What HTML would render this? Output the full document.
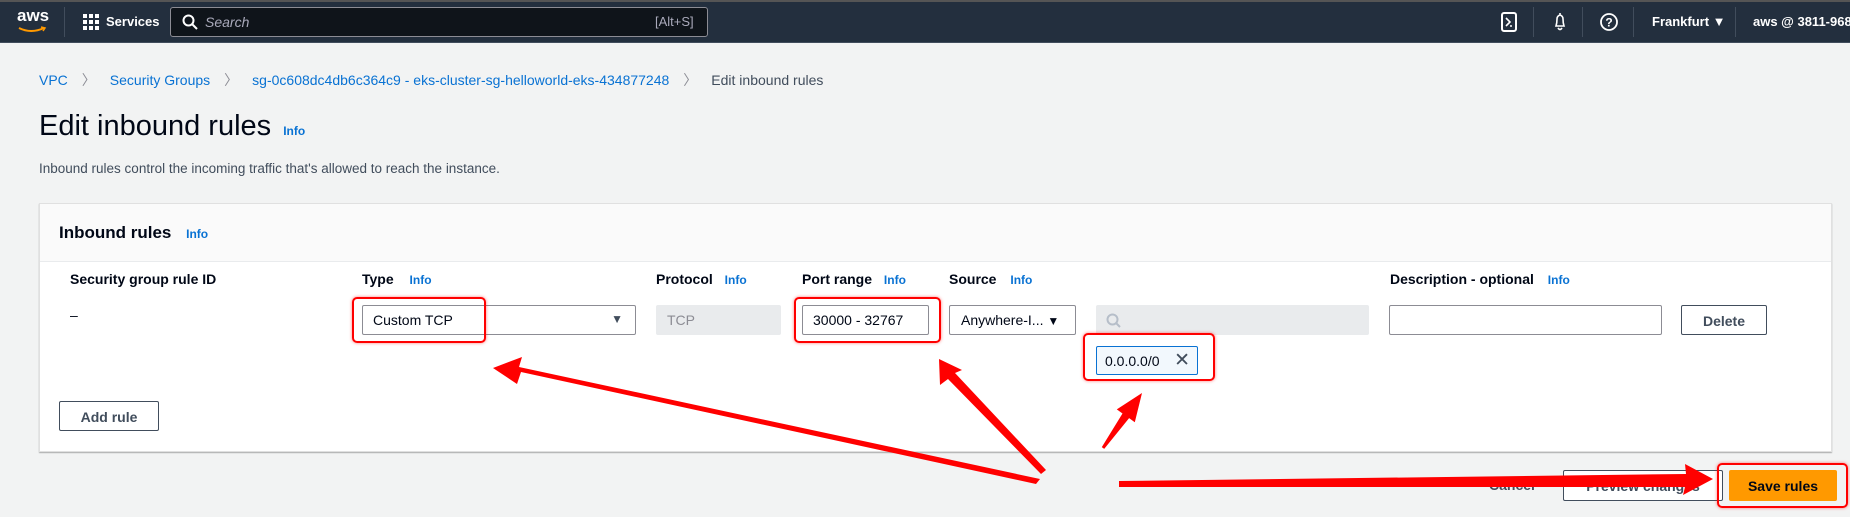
<!DOCTYPE html>
<html><head><meta charset="utf-8"><style>
*{box-sizing:border-box;margin:0;padding:0}
body{width:1850px;height:517px;overflow:hidden;background:#f2f3f3;font-family:"Liberation Sans",sans-serif;color:#000716;position:relative;font-size:14px}
.abs{position:absolute}
.nav{left:0;top:0;width:1850px;height:43px;background:#232f3e;border-top:2px solid #555;border-bottom:1px solid #414d5c}
.w{color:#fff;font-size:13px}
.link{color:#0972d3}
.info{color:#0972d3;font-weight:bold;font-size:12px}
.hd{font-weight:bold;font-size:14px}
.box{border:1px solid #8c8c94;border-radius:2px;background:#fff;height:30px;padding:6px 10px;font-size:14px}
.btn{border:1px solid #414d5c;border-radius:2px;background:#fff;font-weight:bold;font-size:14px;color:#414d5c;text-align:center;padding-top:7px}
.red{border:2px solid #f00;border-radius:5px;box-shadow:0 0 3px rgba(255,0,0,.5)}
.sep{width:1px;height:30px;background:#414d5c;top:7px}
</style></head><body>
<div class="abs nav"></div>
<div class="abs w" style="left:17px;top:6px;font-size:17px;font-weight:bold">aws</div>
<svg class="abs" style="left:17px;top:26px" width="30" height="8"><path d="M2 2 Q14 8 27 2" stroke="#f90" stroke-width="2" fill="none"/><path d="M24 1 L28 2 L26 5" stroke="#f90" stroke-width="1.5" fill="none"/></svg>
<div class="abs sep" style="left:64px"></div>
<svg class="abs" style="left:83px;top:14px" width="16" height="16" fill="#fff"><rect x="0" y="0" width="4" height="4"/><rect x="6" y="0" width="4" height="4"/><rect x="12" y="0" width="4" height="4"/><rect x="0" y="6" width="4" height="4"/><rect x="6" y="6" width="4" height="4"/><rect x="12" y="6" width="4" height="4"/><rect x="0" y="12" width="4" height="4"/><rect x="6" y="12" width="4" height="4"/><rect x="12" y="12" width="4" height="4"/></svg>
<div class="abs w" style="left:106px;top:14px;font-weight:bold">Services</div>
<div class="abs" style="left:170px;top:7px;width:538px;height:30px;background:#0f141a;border:1px solid #8c8c94;border-radius:3px"></div>
<svg class="abs" style="left:182px;top:14px" width="16" height="16"><circle cx="6.5" cy="6.5" r="5" stroke="#fff" stroke-width="2" fill="none"/><path d="M10 10 L15 15" stroke="#fff" stroke-width="2"/></svg>
<div class="abs" style="left:205px;top:14px;color:#aab;font-style:italic;font-size:14px">Search</div>
<div class="abs" style="left:655px;top:14px;color:#aab;font-size:13px">[Alt+S]</div>
<svg class="abs" style="left:1501px;top:12px" width="16" height="20"><rect x="1" y="1" width="14" height="18" rx="2" stroke="#fff" stroke-width="2" fill="none"/><path d="M5 6 L9 10 L5 14 M9 14 H11" stroke="#fff" stroke-width="1.6" fill="none"/></svg>
<div class="abs sep" style="left:1533px"></div>
<svg class="abs" style="left:1552px;top:11px" width="16" height="22"><path d="M8 2 V4 M4 15 Q5 12 5 8 Q5 5 8 4 Q11 5 11 8 Q11 12 12 15 Z M6 17 Q8 20 10 17" stroke="#fff" stroke-width="1.6" fill="none"/></svg>
<div class="abs sep" style="left:1582px"></div>
<svg class="abs" style="left:1599px;top:12px" width="20" height="20"><circle cx="10" cy="10" r="8" stroke="#fff" stroke-width="1.8" fill="none"/><text x="10" y="14.5" fill="#fff" font-size="12" font-weight="bold" text-anchor="middle" font-family="Liberation Sans">?</text></svg>
<div class="abs sep" style="left:1633px"></div>
<div class="abs w" style="left:1652px;top:14px;font-weight:bold">Frankfurt ▼</div>
<div class="abs sep" style="left:1735px"></div>
<div class="abs w" style="left:1753px;top:14px;font-weight:bold;white-space:nowrap">aws @ 3811-9686</div>

<div class="abs" style="left:39px;top:70px;white-space:nowrap;font-size:14px"><span class="link">VPC</span><span style="color:#8c8c94;margin:0 14px">〉</span><span class="link">Security Groups</span><span style="color:#8c8c94;margin:0 14px">〉</span><span class="link">sg-0c608dc4db6c364c9 - eks-cluster-sg-helloworld-eks-434877248</span><span style="color:#8c8c94;margin:0 14px">〉</span><span style="color:#414d5c">Edit inbound rules</span></div>
<div class="abs" style="left:39px;top:110px;font-size:29px;white-space:nowrap">Edit inbound rules <span class="info" style="font-size:12px;margin-left:4px">Info</span></div>
<div class="abs" style="left:39px;top:161px;color:#414d5c;font-size:13.5px">Inbound rules control the incoming traffic that's allowed to reach the instance.</div>

<div class="abs" style="left:39px;top:203px;width:1793px;height:249px;background:#fff;border:1px solid #e0e0e0;box-shadow:0 1px 1px rgba(0,0,0,.3)"></div>
<div class="abs" style="left:40px;top:204px;width:1791px;height:58px;background:#fafafa;border-bottom:1px solid #e9ebed"></div>
<div class="abs" style="left:59px;top:223px;font-size:17px;font-weight:bold">Inbound rules <span class="info" style="margin-left:10px">Info</span></div>
<div class="abs hd" style="left:70px;top:271px">Security group rule ID</div>
<div class="abs hd" style="left:362px;top:271px">Type <span class="info" style="margin-left:12px">Info</span></div>
<div class="abs hd" style="left:656px;top:271px">Protocol <span class="info" style="margin-left:8px">Info</span></div>
<div class="abs hd" style="left:802px;top:271px">Port range <span class="info" style="margin-left:8px">Info</span></div>
<div class="abs hd" style="left:949px;top:271px">Source <span class="info" style="margin-left:10px">Info</span></div>
<div class="abs hd" style="left:1390px;top:271px">Description - optional <span class="info" style="margin-left:10px">Info</span></div>
<div class="abs" style="left:70px;top:307px">–</div>
<div class="abs box" style="left:362px;top:305px;width:274px">Custom TCP<span style="position:absolute;right:12px;top:6px;color:#414d5c;font-size:12px">▼</span></div>
<div class="abs box" style="left:656px;top:305px;width:125px;background:#e9ebed;border-color:#e9ebed;color:#8c8c94">TCP</div>
<div class="abs box" style="left:802px;top:305px;width:127px">30000 - 32767</div>
<div class="abs box" style="left:949px;top:305px;width:127px;padding-left:11px;white-space:nowrap">Anywhere-I... <span style="font-size:12px">▼</span></div>
<div class="abs box" style="left:1096px;top:305px;width:273px;background:#e9ebed;border-color:#e9ebed"></div>
<svg class="abs" style="left:1106px;top:313px" width="16" height="16"><circle cx="6.5" cy="6.5" r="5" stroke="#b6bec9" stroke-width="2" fill="none"/><path d="M10 10 L14 14" stroke="#b6bec9" stroke-width="2"/></svg>
<div class="abs box" style="left:1389px;top:305px;width:273px"></div>
<div class="abs btn" style="left:1681px;top:305px;width:86px;height:30px">Delete</div>
<div class="abs" style="left:1096px;top:346px;width:102px;height:29px;background:#f2f8fd;border:1px solid #0972d3;border-radius:2px;padding:6px 8px;font-size:14px">0.0.0.0/0<span style="position:absolute;right:7px;top:2px;font-size:19px;color:#414d5c">✕</span></div>
<div class="abs btn" style="left:59px;top:401px;width:100px;height:30px">Add rule</div>

<div class="abs" style="left:1489px;top:477px;font-weight:bold;color:#414d5c">Cancel</div>
<div class="abs btn" style="left:1563px;top:470px;width:160px;height:31px">Preview changes</div>
<div class="abs" style="left:1729px;top:470px;width:108px;height:31px;background:#ff9900;border-radius:2px;font-weight:bold;text-align:center;padding-top:8px">Save rules</div>

<div class="abs red" style="left:352px;top:297px;width:134px;height:46px"></div>
<div class="abs red" style="left:794px;top:297px;width:147px;height:46px"></div>
<div class="abs red" style="left:1083px;top:333px;width:132px;height:48px"></div>
<div class="abs red" style="left:1717px;top:463px;width:131px;height:45px"></div>

<svg class="abs" style="left:0;top:0" width="1850" height="517">
<g fill="#f00">
<polygon points="1040,479 1036,484 521,372 517,384 493,368 522,357 519,367"/>
<polygon points="1046,470 1041,474 948,379 940,385 939,359 962,370 955,373"/>
<polygon points="1104.2,448.9 1129.1,418.1 1134.8,422.2 1142,393 1116.8,409.4 1122.5,413.5 1101.8,447.1"/>
<polygon points="1119,481 1119,487 1685,487 1683,495 1713,479 1685,464 1686,474"/>
</g>
</svg>
</body></html>
